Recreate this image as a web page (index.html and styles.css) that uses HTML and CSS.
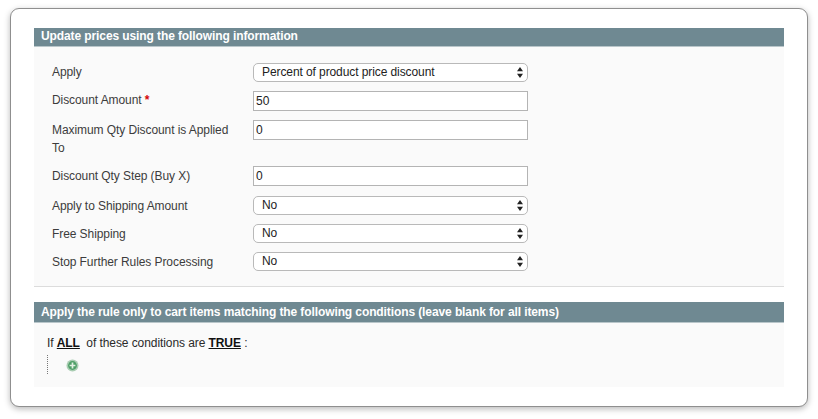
FILE: index.html
```html
<!DOCTYPE html>
<html lang="en">
<head>
<meta charset="utf-8">
<title>Update prices</title>
<link rel="stylesheet" href="styles.css">
</head>
<body>
<main class="card">
  <h2 class="bar bar-first">Update prices using the following information</h2>
  <section class="panel panel-form">
    <div class="row row-select"><label class="lab">Apply</label>
      <div class="sel"><span class="sel-text">Percent of product price discount</span><svg class="arrows" width="6" height="11" viewBox="0 0 6 11"><path d="M3 0 6 4.3H0zM3 11 0 6.7h6z"/></svg></div></div>
    <div class="row row-input"><label class="lab">Discount Amount <span class="req">*</span></label><input class="inp" value="50"></div>
    <div class="row row-input row-tall"><label class="lab lab-low">Maximum Qty Discount is Applied To</label><input class="inp" value="0"></div>
    <div class="row row-input row-step"><label class="lab lab-low">Discount Qty Step (Buy X)</label><input class="inp" value="0"></div>
    <div class="row row-select"><label class="lab lab-low">Apply to Shipping Amount</label>
      <div class="sel"><span class="sel-text">No</span><svg class="arrows" width="6" height="11" viewBox="0 0 6 11"><path d="M3 0 6 4.3H0zM3 11 0 6.7h6z"/></svg></div></div>
    <div class="row row-select"><label class="lab lab-low">Free Shipping</label>
      <div class="sel"><span class="sel-text">No</span><svg class="arrows" width="6" height="11" viewBox="0 0 6 11"><path d="M3 0 6 4.3H0zM3 11 0 6.7h6z"/></svg></div></div>
    <div class="row row-select"><label class="lab lab-low">Stop Further Rules Processing</label>
      <div class="sel"><span class="sel-text">No</span><svg class="arrows" width="6" height="11" viewBox="0 0 6 11"><path d="M3 0 6 4.3H0zM3 11 0 6.7h6z"/></svg></div></div>
  </section>
  <hr class="sep">
  <h2 class="bar bar-second">Apply the rule only to cart items matching the following conditions (leave blank for all items)</h2>
  <section class="panel panel-cond">
    <p class="cond-line">If <a class="cond-link">ALL</a>&nbsp; of these conditions are <a class="cond-link">TRUE</a> :</p>
    <div class="tree">
      <svg class="add" width="13" height="13" viewBox="0 0 13 13"><circle cx="6.5" cy="6.5" r="6" fill="#a9cdb2"/><circle cx="6.5" cy="6.5" r="4.4" fill="#4f9f68"/><path d="M6.5 3.6v5.8M3.6 6.5h5.8" stroke="#e2f0e2" stroke-width="1.7"/></svg>
    </div>
  </section>
</main>
</body>
</html>
```
FILE: styles.css
```css
* { box-sizing: border-box; }
html, body { margin: 0; height: 100%; background: #fff; }
body {
  padding: 8px 10px 12px;
  font-family: "Liberation Sans", Arial, sans-serif;
  font-size: 12px;
  color: #333;
}
.card {
  width: 798px;
  height: 399px;
  background: #fff;
  border: 1px solid #8f8f8f;
  border-radius: 9px;
  box-shadow: 0 2px 6px rgba(0, 0, 0, .28);
  padding: 19px 23px 0;
}
.bar {
  margin: 0;
  background: #6f8992;
  color: #fff;
  font-size: 12px;
  font-weight: bold;
  letter-spacing: -.1px;
  line-height: 16px;
  padding: 0 7px;
}
.bar-first { height: 19px; border-bottom: 1px solid #b9c6ca; }
.bar-second { height: 21px; padding-top: 2px; border-bottom: 1px solid #b9c6ca; }
.panel { background: #fafafa; }
.panel-form { padding: 16px 18px 0; height: 239px; }
.row { display: flex; align-items: flex-start; }
.row-select { height: 28px; }
.row-input { height: 29px; }
.row-tall { height: 46px; }
.row-step { height: 30px; }
.lab { width: 201px; flex: none; line-height: 18px; color: #3c3c3c; letter-spacing: -.08px; padding-right: 14px; }
.lab-low { padding-top: 1px; }
.req { color: #d40707; font-weight: bold; }
.sel {
  width: 275px;
  height: 19px;
  border: 1px solid #b9b9b9;
  border-radius: 5px;
  background: #fff;
  display: flex;
  align-items: center;
  justify-content: space-between;
  padding: 0 4px 2px 8px;
  color: #222;
  letter-spacing: -.09px;
}
.arrows { fill: #222; margin-top: 2px; }
.inp {
  width: 275px;
  height: 20px;
  border: 1px solid #b4b4b4;
  background: #fff;
  padding: 0 2px;
  font: 12px "Liberation Sans", Arial, sans-serif;
  color: #222;
  margin: 0;
  border-radius: 0;
  outline: 0;
}
.sep { margin: 0 0 15px; height: 1px; border: 0; background: #dcdcdc; }
.panel-cond { height: 64px; padding: 11px 13px 0; }
.cond-line { margin: 0; line-height: 18px; color: #2a2a2a; letter-spacing: -.08px; }
.cond-link { font-weight: bold; text-decoration: underline; color: #111; }
.tree {
  margin-top: 3px;
  height: 19px;
  border-left: 1px dotted #777;
  display: flex;
  align-items: center;
  padding: 2px 0 0 18px;
}
```
